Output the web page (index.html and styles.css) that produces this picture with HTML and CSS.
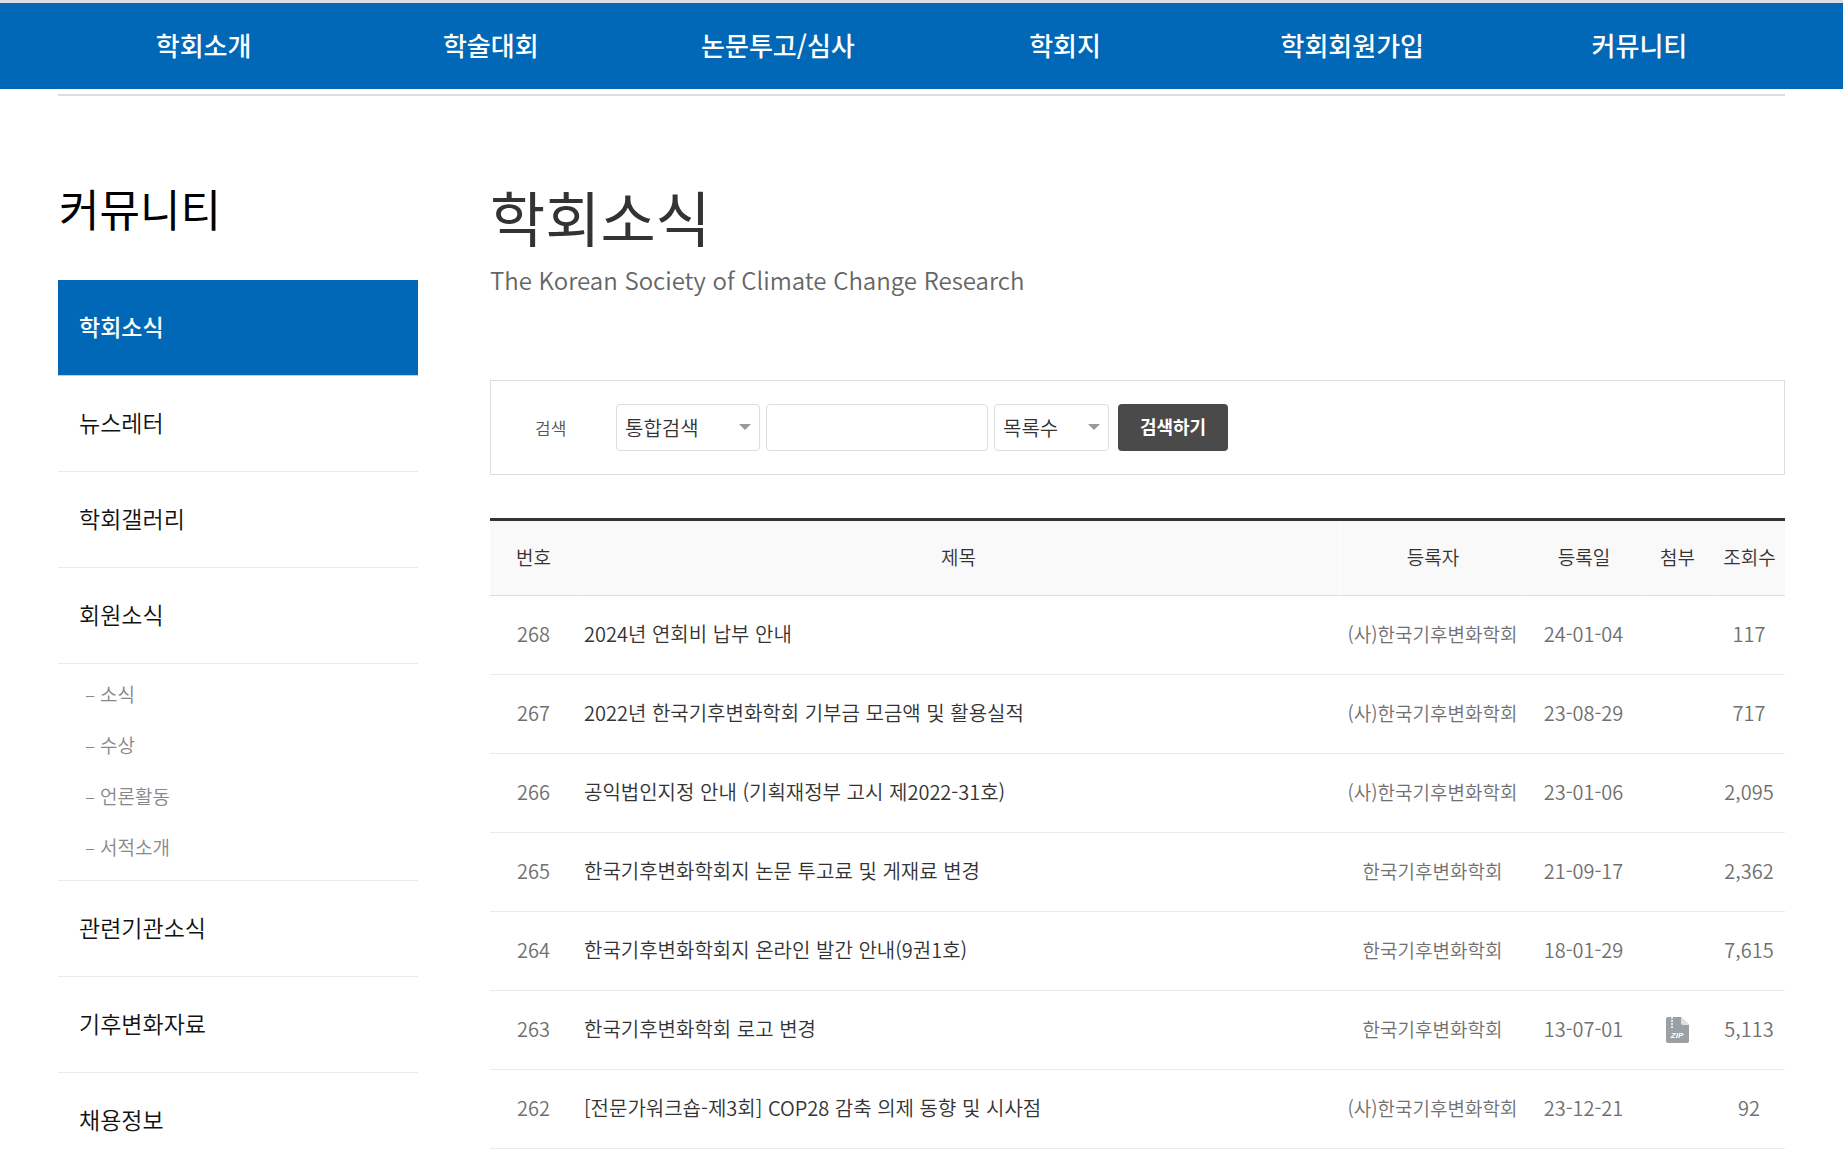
FILE: index.html
```html
<!DOCTYPE html>
<html lang="ko">
<head>
<meta charset="utf-8">
<meta name="viewport" content="width=device-width, initial-scale=1">
<title>학회소식</title>
<link rel="stylesheet" href="styles.css">
</head>
<body>
<header class="site-header">
  <nav class="gnb">
    <a href="#">학회소개</a>
    <a href="#">학술대회</a>
    <a href="#">논문투고/심사</a>
    <a href="#">학회지</a>
    <a href="#">학회회원가입</a>
    <a href="#">커뮤니티</a>
  </nav>
</header>
<div class="container">
  <aside class="side">
    <h2 class="side-title">커뮤니티</h2>
    <ul class="side-menu">
      <li><a class="side-link active" href="#">학회소식</a></li>
      <li><a class="side-link" href="#">뉴스레터</a></li>
      <li><a class="side-link" href="#">학회갤러리</a></li>
      <li><a class="side-link" href="#">회원소식</a>
        <ul class="sub-menu">
          <li><a href="#">소식</a></li>
          <li><a href="#">수상</a></li>
          <li><a href="#">언론활동</a></li>
          <li><a href="#">서적소개</a></li>
        </ul>
      </li>
      <li><a class="side-link" href="#">관련기관소식</a></li>
      <li><a class="side-link" href="#">기후변화자료</a></li>
      <li><a class="side-link" href="#">채용정보</a></li>
    </ul>
  </aside>
  <main class="content">
    <h1 class="page-title">학회소식</h1>
    <p class="page-sub">The Korean Society of Climate Change Research</p>
    <form class="search">
      <label class="search-label" for="keyword">검색</label>
      <span class="select-wrap"><select class="field select-type" aria-label="검색 구분"><option>통합검색</option></select></span>
      <input class="field keyword" id="keyword" type="text">
      <span class="select-wrap"><select class="field select-count" aria-label="목록수"><option>목록수</option></select></span>
      <button class="search-btn" type="button">검색하기</button>
    </form>
    <table class="board">
      <thead>
        <tr><th class="col-no">번호</th><th>제목</th><th class="col-author">등록자</th><th class="col-date">등록일</th><th class="col-file">첨부</th><th class="col-hit">조회수</th></tr>
      </thead>
      <tbody>
        <tr><td>268</td><td class="title"><a href="#">2024년 연회비 납부 안내</a></td><td class="author">(사)한국기후변화학회</td><td>24-01-04</td><td></td><td>117</td></tr>
        <tr><td>267</td><td class="title"><a href="#">2022년 한국기후변화학회 기부금 모금액 및 활용실적</a></td><td class="author">(사)한국기후변화학회</td><td>23-08-29</td><td></td><td>717</td></tr>
        <tr><td>266</td><td class="title"><a href="#">공익법인지정 안내 (기획재정부 고시 제2022-31호)</a></td><td class="author">(사)한국기후변화학회</td><td>23-01-06</td><td></td><td>2,095</td></tr>
        <tr><td>265</td><td class="title"><a href="#">한국기후변화학회지 논문 투고료 및 게재료 변경</a></td><td class="author">한국기후변화학회</td><td>21-09-17</td><td></td><td>2,362</td></tr>
        <tr><td>264</td><td class="title"><a href="#">한국기후변화학회지 온라인 발간 안내(9권1호)</a></td><td class="author">한국기후변화학회</td><td>18-01-29</td><td></td><td>7,615</td></tr>
        <tr><td>263</td><td class="title"><a href="#">한국기후변화학회 로고 변경</a></td><td class="author">한국기후변화학회</td><td>13-07-01</td><td class="file">
          <svg class="zip" viewBox="0 0 23 26" role="img" aria-label="첨부파일">
            <path d="M2 0H15L23 8V24a2 2 0 0 1-2 2H2a2 2 0 0 1-2-2V2a2 2 0 0 1 2-2z" fill="#9ba0a5"/>
            <path d="M15 0L23 8H17a2 2 0 0 1-2-2z" fill="#dfe2e4"/>
            <path d="M6 0V12" stroke="#e4e6e8" stroke-width="2" stroke-dasharray="2 1"/>
            <text x="11" y="21" text-anchor="middle" class="zip-text">ZIP</text>
          </svg></td><td>5,113</td></tr>
        <tr><td>262</td><td class="title"><a href="#">[전문가워크숍-제3회] COP28 감축 의제 동향 및 시사점</a></td><td class="author">(사)한국기후변화학회</td><td>23-12-21</td><td></td><td>92</td></tr>
      </tbody>
    </table>
  </main>
</div>
</body>
</html>
```
FILE: styles.css
```css
* { box-sizing: border-box; margin: 0; padding: 0; }

body {
  background: #fff;
  color: #333;
  font-family: "Noto Sans CJK KR", sans-serif;
  font-size: 20px;
  font-weight: 350;
}

a { color: inherit; text-decoration: none; }
ul { list-style: none; }

/* top navigation */
.site-header {
  border-top: 3px solid #d9dde6;
  background: #0068b7;
}
.gnb {
  display: grid;
  grid-template-columns: repeat(6, 1fr);
  padding: 0 60px 2px;
}
.gnb a {
  color: #fff;
  font-size: 26px;
  font-weight: 500;
  line-height: 84px;
  text-align: center;
}

.container {
  display: flex;
  gap: 72px;
  margin: 5px 58px 0;
  padding-top: 80px;
  border-top: 2px solid #ddd;
}

/* side menu */
.side { flex: 0 0 360px; }
.side-title {
  padding-left: 1px;
  color: #000;
  font-size: 44px;
  font-weight: 400;
  line-height: 64px;
  margin-bottom: 40px;
}
.side-link {
  display: block;
  height: 96px;
  padding-left: 21px;
  border-bottom: 1px solid #ebebeb;
  color: #111;
  font-size: 23px;
  line-height: 92px;
}
.side-link.active {
  border-bottom-color: #b8d2e8;
  background: #0068b7;
  color: #fff;
  font-weight: 500;
}
.sub-menu {
  padding: 4px 0 8px 27px;
  border-bottom: 1px solid #ebebeb;
  color: #888;
  font-size: 19px;
  line-height: 51px;
}
.sub-menu a::before { content: "–"; display: inline-block; width: 15px; }

/* main content */
.content { flex: 1; min-width: 0; }
.page-title {
  color: #333;
  font-size: 60px;
  font-weight: 400;
  line-height: 80px;
}
.page-sub {
  padding-top: 6px;
  color: #666;
  font-size: 24px;
  line-height: 36px;
  margin-bottom: 82px;
}

.search {
  display: flex;
  align-items: center;
  gap: 6px;
  height: 95px;
  padding-left: 44px;
  border: 1px solid #ddd;
}
.search-label { width: 75px; color: #555; font-size: 17px; }
.field {
  height: 47px;
  border: 1px solid #ddd;
  border-radius: 4px;
  background: #fff;
  color: #333;
  font: inherit;
}
.select-wrap { position: relative; }
.select-wrap::after {
  content: "";
  position: absolute;
  right: 9px;
  top: 20px;
  border: 6px solid transparent;
  border-top-color: #999;
  border-bottom: 0;
  pointer-events: none;
}
.select-wrap .field { display: block; padding-left: 8px; appearance: none; }
.select-type { width: 144px; }
.keyword { width: 222px; padding: 0 8px; }
.select-count { width: 115px; }
.search-btn {
  width: 110px;
  height: 47px;
  margin-left: 3px;
  padding-bottom: 4px;
  border: 0;
  border-radius: 4px;
  background: #4a4a4a;
  color: #fff;
  font: inherit;
  font-size: 18px;
  font-weight: 700;
}

/* board list */
.board {
  width: 100%;
  margin-top: 43px;
  border-top: 3px solid #333;
  border-spacing: 0;
  table-layout: fixed;
}
.board th {
  height: 75px;
  padding-bottom: 4px;
  border-bottom: 1px solid #ddd;
  background: #f9f9f9;
  font-size: 19px;
  font-weight: 350;
}
.board th + th { border-left: 1px solid #fcfcfc; }
.board td {
  height: 79px;
  padding-bottom: 3px;
  border-bottom: 1px solid #ebebeb;
  color: #707070;
  text-align: center;
  white-space: nowrap;
}
.board .title { padding-left: 7px; color: #333; text-align: left; }
.board .author { font-size: 19px; }
.board .file { padding-bottom: 0; }
.col-no { width: 87px; }
.col-author { width: 187px; }
.col-date { width: 115px; }
.col-file, .col-hit { width: 72px; }
.zip { display: block; width: 23px; height: 26px; margin: 0 auto; }
.zip-text { fill: #fff; font: italic 700 8px "Liberation Sans", sans-serif; }
```
